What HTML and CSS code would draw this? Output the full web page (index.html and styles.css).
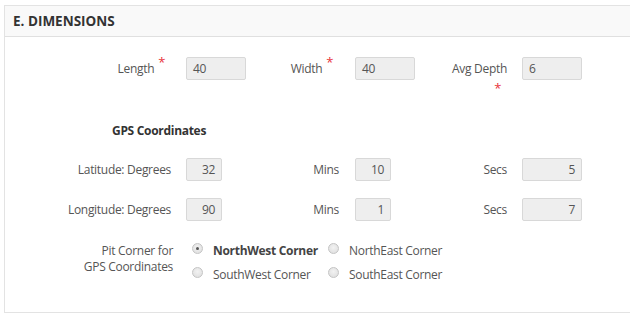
FILE: index.html
```html
<!DOCTYPE html>
<html>
<head>
<meta charset="utf-8">
<link rel="stylesheet" href="styles.css">
</head>
<body>
<div class="panel">
  <div class="panel-head">E. DIMENSIONS</div>
  <div class="panel-body">
    <div class="grid row-first">
      <div class="lbl">Length <span class="req">*</span></div>
      <div class="inp">40</div>
      <div class="lbl">Width <span class="req">*</span></div>
      <div class="inp">40</div>
      <div class="lbl"><span class="wrap">Avg&nbsp;Depth <span class="req">*</span></span></div>
      <div class="inp">6</div>
    </div>

    <div class="gps-title">GPS Coordinates</div>

    <div class="grid row-gps">
      <div class="lbl">Latitude: Degrees</div>
      <div class="inp num short">32</div>
      <div class="lbl">Mins</div>
      <div class="inp num short">10</div>
      <div class="lbl">Secs</div>
      <div class="inp num">5</div>
    </div>

    <div class="grid row-gps">
      <div class="lbl">Longitude: Degrees</div>
      <div class="inp num short">90</div>
      <div class="lbl">Mins</div>
      <div class="inp num short">1</div>
      <div class="lbl">Secs</div>
      <div class="inp num">7</div>
    </div>

    <div class="corner-row">
      <div class="lbl multi">Pit Corner for<br>GPS Coordinates</div>
      <div class="radios">
        <label class="opt checked"><span class="radio"></span><span>NorthWest Corner</span></label>
        <label class="opt"><span class="radio"></span><span>NorthEast Corner</span></label>
        <label class="opt"><span class="radio"></span><span>SouthWest Corner</span></label>
        <label class="opt"><span class="radio"></span><span>SouthEast Corner</span></label>
      </div>
    </div>
  </div>
</div>
</body>
</html>
```

FILE: styles.css
```css
html, body {
  margin: 0;
  padding: 0;
  background: #ffffff;
}
body {
  font-family: "Open Sans", "Noto Sans", sans-serif;
  font-size: 12px;
  letter-spacing: -0.3px;
  color: #555555;
}
.panel {
  margin: 5px 0 0 4px;
  border: 1px solid #e3e3e3;
  border-right: none;
  height: 308px;
  box-sizing: border-box;
}
.panel-head {
  height: 30px;
  background: #f9f9f9;
  border-bottom: 1px solid #e0e0e0;
  padding-left: 8px;
  font-size: 13.5px;
  font-weight: 700;
  letter-spacing: 0;
  color: #333333;
  line-height: 30px;
}
.panel-body {
  padding-top: 20px;
}
.grid {
  display: grid;
  grid-template-columns: 181px 60px 109px 60px 107px 60px;
  align-items: start;
}
.lbl {
  text-align: right;
  padding-right: 15px;
  line-height: 23px;
  white-space: nowrap;
}
.grid .lbl:nth-child(3) { padding-right: 16px; }
.wrap {
  display: inline-block;
  width: 60px;
  white-space: normal;
  line-height: 23px;
}
.wrap .req {
  vertical-align: 3px;
}
.req {
  color: #e8343a;
  font-size: 13px;
  vertical-align: 6px;
  line-height: 0;
  margin-left: 1px;
  margin-right: 6px;
}
.inp {
  height: 23px;
  box-sizing: border-box;
  background: #eeeeee;
  border: 1px solid #d8d8d8;
  border-radius: 2px;
  padding: 0 6px;
  line-height: 21px;
  color: #555555;
}
.inp.num { text-align: right; }
.inp.short { width: 36px; }
.gps-title {
  margin-top: 26px;
  padding-left: 107px;
  font-weight: 700;
  color: #333333;
  line-height: 16px;
}
.row-first { height: 40px; }
.gps-title + .row-gps { margin-top: 19px; }
.row-gps + .row-gps { margin-top: 17px; }
.corner-row {
  margin-top: 20px;
  display: grid;
  grid-template-columns: 181px auto;
  align-items: start;
}
.lbl.multi {
  line-height: 16px;
  padding-top: 2px;
  padding-right: 13px;
}
.radios {
  display: grid;
  grid-template-columns: 136px auto;
  row-gap: 6px;
}
.opt {
  display: flex;
  align-items: center;
  height: 16px;
  padding-left: 6px;
  padding-top: 2px;
  line-height: 16px;
  white-space: nowrap;
}
.radio {
  flex: none;
  width: 11px;
  height: 11px;
  box-sizing: border-box;
  border: 1px solid #c4c4c4;
  border-radius: 50%;
  background: radial-gradient(circle at 50% 40%, #f2f2f2 0%, #dcdcdc 100%);
  margin-right: 10px;
  margin-top: -5px;
  position: relative;
}
.opt.checked .radio::after {
  content: "";
  position: absolute;
  left: 3px;
  top: 3px;
  width: 3px;
  height: 3px;
  border-radius: 50%;
  background: #555555;
}
.opt.checked span:last-child {
  font-weight: 700;
  color: #444444;
}
```
